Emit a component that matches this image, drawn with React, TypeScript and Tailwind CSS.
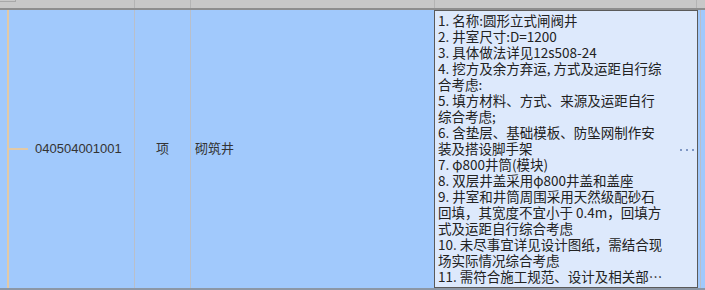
const lines = [
  '1. 名称:圆形立式闸阀井',
  '2. 井室尺寸:D=1200',
  '3. 具体做法详见12s508-24',
  '4. 挖方及余方弃运, 方式及运距自行综',
  '合考虑:',
  '5. 填方材料、方式、来源及运距自行',
  '综合考虑;',
  '6. 含垫层、基础模板、防坠网制作安',
  '装及搭设脚手架',
  '7. φ800井筒(模块)',
  '8. 双层井盖采用φ800井盖和盖座',
  '9. 井室和井筒周围采用天然级配砂石',
  '回填，其宽度不宜小于 0.4m，回填方',
  '式及运距自行综合考虑',
  '10. 未尽事宜详见设计图纸，需结合现',
  '场实际情况综合考虑',
  '11. 需符合施工规范、设计及相关部…',
];

export default function App() {
  return (
    <div
      className="flex h-[290px] w-[705px] flex-col overflow-hidden bg-[#a1c9fc]"
      style={{ fontFamily: '"Liberation Sans", "Noto Sans CJK SC", sans-serif' }}
    >
      {/* header strip */}
      <div className="flex h-[8px] shrink-0 bg-[#c8c8c8]">
        <div className="h-[2px] w-[16px] border-r border-b border-[#a8a8a8]" />
        <div className="w-[119px] border-r border-[#b4b4b4]" />
        <div className="w-[56px] border-r border-[#b4b4b4]" />
        <div className="w-[244px] border-r border-[#b4b4b4]" />
        <div className="w-[262px] border-r border-[#b4b4b4]" />
      </div>
      <div className="h-[2px] shrink-0 bg-[#8e8e8e]" />

      {/* row */}
      <div className="flex min-h-0 flex-1 text-[13px] text-[#333]">
        <div className="relative flex w-[135px] items-center border-r border-[#b9bfca]">
          <div className="ml-[7px] h-full w-[2px] bg-[#e2c9a6]" />
          <div className="h-[2px] w-[19px] bg-[#e2c9a6]" />
          <span className="ml-[7px]">040504001001</span>
        </div>
        <div className="flex w-[56px] items-center justify-center border-r border-[#b9bfca]">项</div>
        <div className="flex w-[243px] items-center pl-[4px]">砌筑井</div>
        <div
          className="w-[264px] border border-[#5a5a5a] bg-[#dde9fc] pl-[3px] pt-[1px] text-[13.5px] leading-[16px] text-[#222]"
          style={{ fontFamily: '"Noto Sans CJK SC", sans-serif' }}
        >
          <div className="relative">
            {lines.map((l) => (
              <div key={l} className="h-[16px] whitespace-nowrap">{l}</div>
            ))}
            <div className="absolute right-[3px] top-[137px] flex gap-[4px]">
              <span className="h-[2px] w-[2px] bg-[#7f97c4]" />
              <span className="h-[2px] w-[2px] bg-[#7f97c4]" />
              <span className="h-[2px] w-[2px] bg-[#7f97c4]" />
            </div>
          </div>
        </div>
        <div className="w-[2px]" />
        <div className="flex-1 border-l border-[#b9bfca]" />
      </div>
      <div className="h-[2px] shrink-0 bg-[#8c97a6]" />
    </div>
  );
}
